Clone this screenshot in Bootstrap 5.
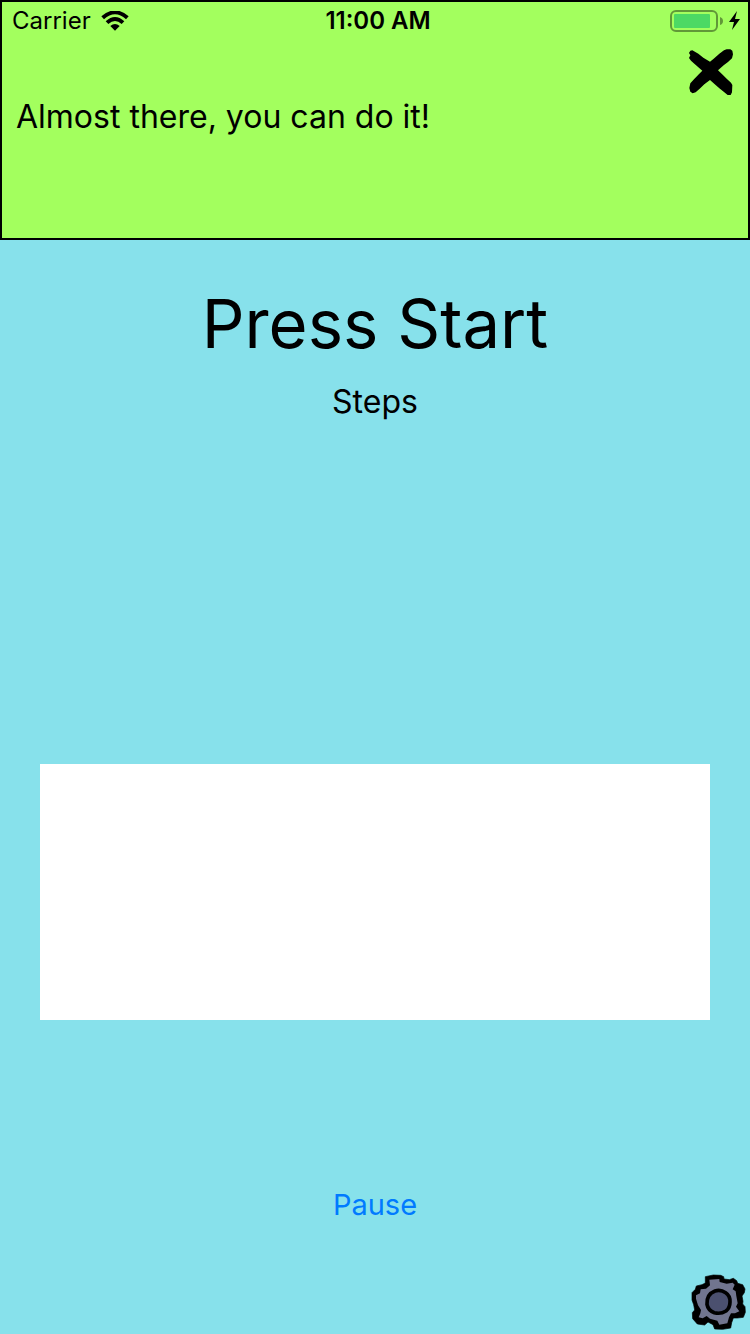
<!DOCTYPE html>
<html lang="en">
<head>
<meta charset="utf-8">
<meta name="viewport" content="width=device-width, initial-scale=1">
<title>Press Start</title>
<link href="https://cdn.jsdelivr.net/npm/bootstrap@5.3.0/dist/css/bootstrap.min.css" rel="stylesheet">
<style>
body { background: #87e1eb; color: #000; font-family: Inter, "Liberation Sans", sans-serif; }
.banner { background: #a3ff5e; border: 2px solid #000; min-height: 240px; }
.status-bar { height: 38px; padding: 0 4px 0 10px; font-size: 24px; line-height: 36px; }
.status-side { flex: 1 1 0; }
.carrier { gap: 10px; }
.banner-body { padding: 9px 14px 0; }
.message { font-size: 32px; line-height: 40px; padding-top: 48px; }
.title { font-size: 67px; line-height: 88px; margin-top: 40px; }
.steps { font-size: 32px; line-height: 40px; margin-top: 14px; }
.panel { height: 256px; margin: 342px 40px 0; }
.pause { font-size: 29px; line-height: 36px; color: #007aff; margin-top: 167px; }
.settings { padding: 0 4px 4px; }
</style>
</head>
<body class="d-flex flex-column min-vh-100">
<header class="banner">
  <div class="status-bar d-flex align-items-center">
    <div class="status-side carrier d-flex align-items-center">
      <span>Carrier</span>
      <svg width="28" height="20" viewBox="0 0 84 60" aria-hidden="true">
        <path d="M1 16Q42-20 83 16L75 25Q42-5 9 25Z"/>
        <path d="M14 31Q42 5 70 31L62 39Q42 21 22 39Z"/>
        <path d="M28 45Q42 33 56 45L42 59Z"/>
      </svg>
    </div>
    <div class="fw-semibold">11:00 AM</div>
    <div class="status-side d-flex align-items-center justify-content-end">
      <svg width="76" height="28" viewBox="0 0 76 28" role="img" aria-label="Battery charging">
        <g opacity=".4"><rect x="3" y="4" width="46" height="20" rx="5" fill="none" stroke="#000" stroke-width="2"/><path d="M52 10Q55 11 55 14T52 18Z"/></g>
        <rect x="6" y="7" width="36" height="14" rx="1" fill="#4cd964"/>
        <path d="M69 4L61 15H66L64 23L72 12H67Z"/>
      </svg>
    </div>
  </div>
  <div class="banner-body d-flex align-items-start justify-content-between">
    <p class="message mb-0">Almost there, you can do it!</p>
    <button class="btn p-0 border-0 d-flex" type="button" aria-label="Close">
      <svg width="46" height="48" viewBox="0 0 138 144">
        <path d="M7 5L13 4L22 9L31 14L46 26L66 38L77 29L94 14L108 4L116 1L127 1L133 5L135 16L132 28L120 39L107 49L90 64L104 77L116 89L129 101L133 108L132 130L128 138L119 138L108 129L94 118L82 107L66 93L49 106L35 119L23 130L14 133L7 128L4 117L7 103L18 91L31 77L43 65L31 55L19 44L9 35L3 27L7 19L3 12Z"/>
      </svg>
    </button>
  </div>
</header>
<main class="text-center flex-grow-1 d-flex flex-column">
  <h1 class="title fw-normal mb-0">Press Start</h1>
  <p class="steps mb-0">Steps</p>
  <div class="panel bg-white"></div>
  <div><button class="pause btn p-0 border-0" type="button">Pause</button></div>
</main>
<footer class="settings d-flex justify-content-end">
  <button class="btn p-0 border-0 d-flex" type="button" aria-label="Settings">
    <svg width="56" height="56" viewBox="30 30 168 168">
      <path d="M76 38L100 33L122 34L131 38L132 45L148 47L160 43L170 50L173 58L188 62L195 75L193 86L186 96L189 112L188 120L195 128L196 145L190 160L172 162L160 162L155 176L152 192L128 196L104 195L99 182L84 174L74 183L52 180L38 164L37 146L44 138L41 122L36 108L36 86L46 76L49 66L66 62L76 57Z" stroke="#000" stroke-width="2" stroke-linejoin="round"/>
      <path d="M88 47L118 45L119 54L140 59L158 56L164 62L158 76L167 82L169 96L173 118L168 128L178 142L165 148L153 148L147 160L142 178L118 182L112 170L90 164L80 156L68 163L56 160L61 148L63 138L54 124L48 104L48 94L60 88L62 76L78 74L90 64Z" fill="#71758f"/>
      <path d="M105 81Q122 76 137 86Q151 95 150 114Q150 132 138 141Q122 151 103 146Q84 139 81 121Q79 91 105 81Z" fill="#4b506f" stroke="#000" stroke-width="11"/>
    </svg>
  </button>
</footer>
<script src="https://cdn.jsdelivr.net/npm/bootstrap@5.3.0/dist/js/bootstrap.bundle.min.js"></script>
</body>
</html>
